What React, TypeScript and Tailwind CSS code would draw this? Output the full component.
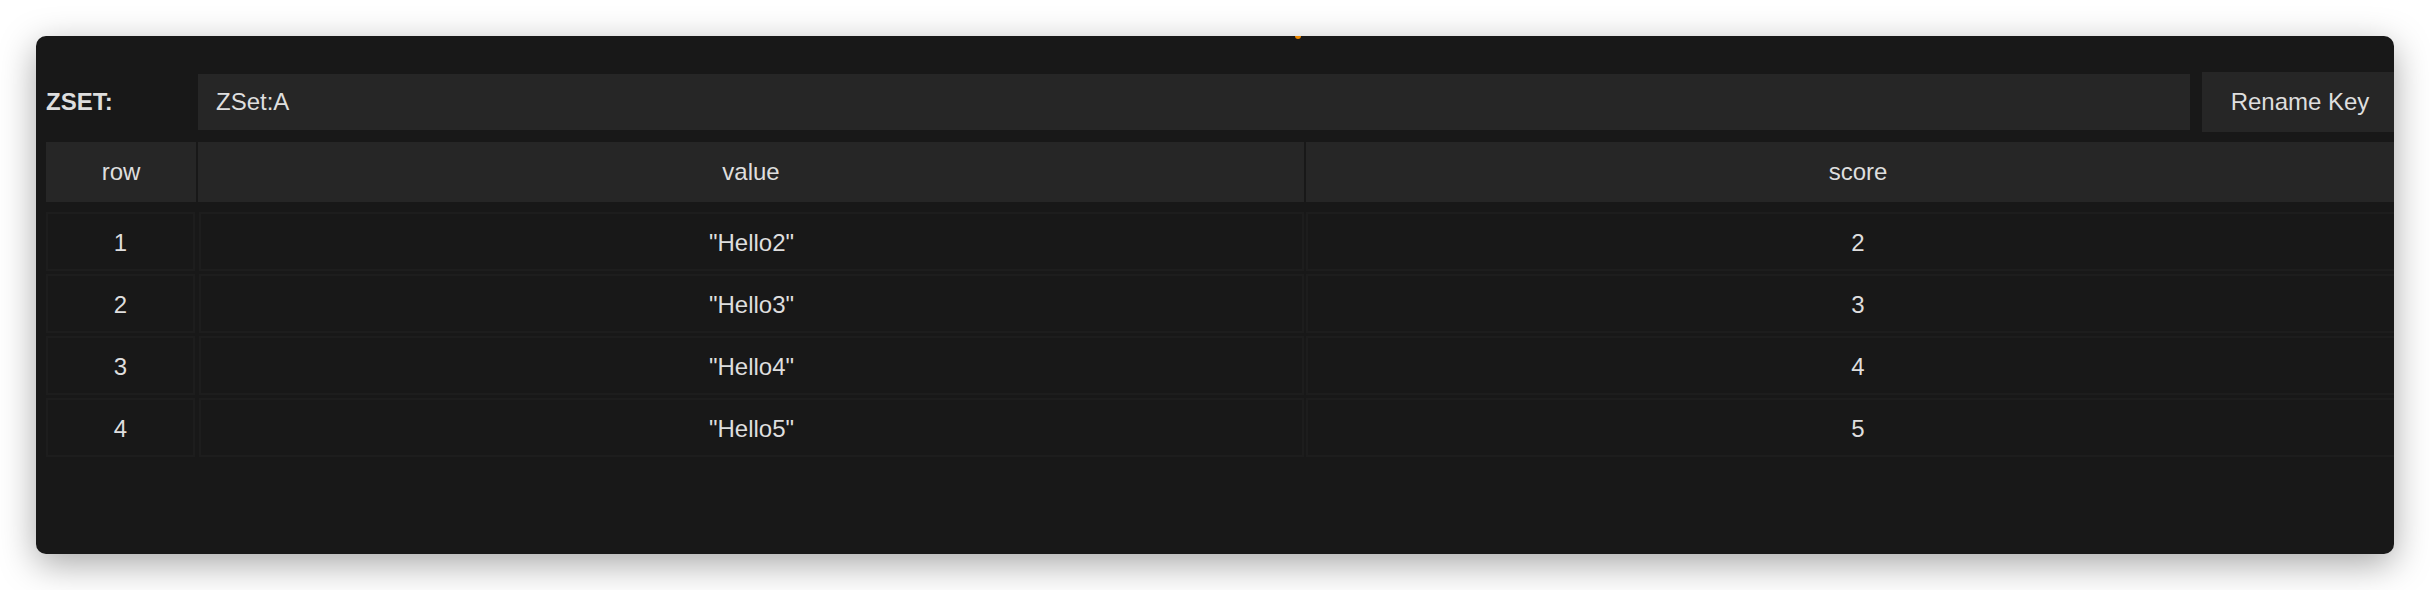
import React from 'react';

const rows = [
  { row: 1, value: '"Hello2"', score: 2 },
  { row: 2, value: '"Hello3"', score: 3 },
  { row: 3, value: '"Hello4"', score: 4 },
  { row: 4, value: '"Hello5"', score: 5 },
];

const cols = 'grid grid-cols-[150px_1106px_1104px] gap-[2px]';

export default function App() {
  return (
    <div
      className="w-[2430px] h-[590px] bg-white pt-[36px] pl-[36px]"
      style={{ fontFamily: '"Liberation Sans", Arial, sans-serif' }}
    >
      <div className="relative w-[2358px] h-[518px] bg-[#181818] rounded-[10px] overflow-hidden shadow-[0_10px_36px_rgba(0,0,0,0.35)] text-[24px] text-[#dedede]">
        <div className="absolute top-0 left-[1259px] w-[6px] h-[3px] rounded-b-sm bg-[#f08a00]" />
        <div className="w-[2370px] pl-[10px] pt-[36px]">
          <div className="flex items-center h-[60px]">
            <div className="w-[152px] shrink-0 font-bold">ZSET:</div>
            <div className="w-[1992px] shrink-0 h-[56px] bg-[#262626] flex items-center pl-[18px]">ZSet:A</div>
            <div className="ml-[12px] shrink-0 w-[196px] h-[60px] bg-[#262626] flex items-center justify-center">Rename Key</div>
          </div>
          <div className={`${cols} mt-[10px] h-[60px]`}>
            <div className="bg-[#262626] flex items-center justify-center">row</div>
            <div className="bg-[#262626] flex items-center justify-center">value</div>
            <div className="bg-[#262626] flex items-center justify-center">score</div>
          </div>
          <div className="mt-[10px] flex flex-col gap-[3px]">
            {rows.map((r) => (
              <div key={r.row} className={`${cols} h-[59px]`}>
                <div className="border-2 border-[#1d1d1d] mr-[1px] pt-[3px] flex items-center justify-center">{r.row}</div>
                <div className="border-2 border-[#1d1d1d] ml-[1px] pt-[3px] flex items-center justify-center">{r.value}</div>
                <div className="border-2 border-[#1d1d1d] pt-[3px] flex items-center justify-center">{r.score}</div>
              </div>
            ))}
          </div>
        </div>
      </div>
    </div>
  );
}
